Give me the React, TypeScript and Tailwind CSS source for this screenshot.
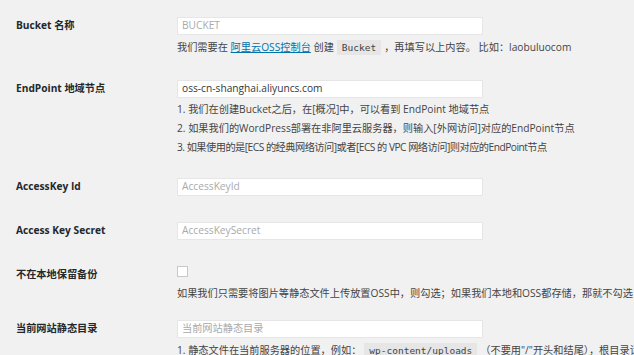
import React from "react";

const font = { fontFamily: '"Open Sans", "Noto Sans CJK SC", sans-serif' };

function Label({ children }: { children: React.ReactNode }) {
  return (
    <div className="w-[177px] shrink-0 pl-[16px] h-[18px] flex items-center font-bold text-[#23282d]">
      {children}
    </div>
  );
}

function Input({ placeholder, value }: { placeholder?: string; value?: string }) {
  return (
    <div className="w-[306px] h-[18px] bg-white border border-[#e6e6e6] flex items-center pl-[4px]">
      {value ? (
        <span className="text-[#32373c]">{value}</span>
      ) : (
        <span className="text-[#a7aaad]">{placeholder}</span>
      )}
    </div>
  );
}

function Code({ children }: { children: React.ReactNode }) {
  return (
    <span
      className="bg-[#e6e6e6] px-[5px] py-[2px] mx-[3px] text-[9.5px] text-[#444]"
      style={{ fontFamily: '"DejaVu Sans Mono", "Liberation Mono", monospace' }}
    >
      {children}
    </span>
  );
}

export default function App() {
  return (
    <div
      className="w-[634px] h-[355px] overflow-hidden bg-[#f1f1f1] text-[10.2px] text-[#444] whitespace-nowrap pt-[17px]"
      style={font}
    >
      {/* Bucket */}
      <div className="flex">
        <Label>Bucket 名称</Label>
        <Input placeholder="BUCKET" />
      </div>
      <div className="pl-[177px] mt-[3px] leading-[19px]">
        我们需要在{" "}
        <span className="text-[#0073aa] underline">阿里云OSS控制台</span> 创建
        <Code>Bucket</Code>，再填写以上内容。 比如：laobuluocom
      </div>

      {/* EndPoint */}
      <div className="flex mt-[23px]">
        <Label>EndPoint 地域节点</Label>
        <Input value="oss-cn-shanghai.aliyuncs.com" />
      </div>
      <div className="pl-[177px] mt-[2px] leading-[19px]">
        <div>1. 我们在创建Bucket之后，在[概况]中，可以看到 EndPoint 地域节点</div>
        <div>2. 如果我们的WordPress部署在非阿里云服务器，则输入[外网访问]对应的EndPoint节点</div>
        <div className="tracking-[-0.5px]">
          3. 如果使用的是[ECS 的经典网络访问]或者[ECS 的 VPC 网络访问]则对应的EndPoint节点
        </div>
      </div>

      {/* AccessKey Id */}
      <div className="flex mt-[21px]">
        <Label>AccessKey Id</Label>
        <Input placeholder="AccessKeyId" />
      </div>

      {/* Access Key Secret */}
      <div className="flex mt-[26px]">
        <Label>Access Key Secret</Label>
        <Input placeholder="AccessKeySecret" />
      </div>

      {/* Checkbox */}
      <div className="flex mt-[26px]">
        <div className="w-[177px] shrink-0 pl-[16px] pt-[1px] font-bold text-[#23282d] leading-[14px]">
          不在本地保留备份
        </div>
        <div className="w-[11px] h-[11px] bg-white border border-[#c8c8c8]" />
      </div>
      <div className="pl-[177px] mt-[3px] leading-[19px]">
        如果我们只需要将图片等静态文件上传放置OSS中，则勾选；如果我们本地和OSS都存储，那就不勾选
      </div>

      {/* 当前网站静态目录 */}
      <div className="flex mt-[17px]">
        <Label>当前网站静态目录</Label>
        <Input placeholder="当前网站静态目录" />
      </div>
      <div className="pl-[177px] mt-[3px] leading-[19px]">
        1. 静态文件在当前服务器的位置，例如：
        <Code>wp-content/uploads</Code>（不要用"/"开头和结尾），根目录请输入/
      </div>
    </div>
  );
}
